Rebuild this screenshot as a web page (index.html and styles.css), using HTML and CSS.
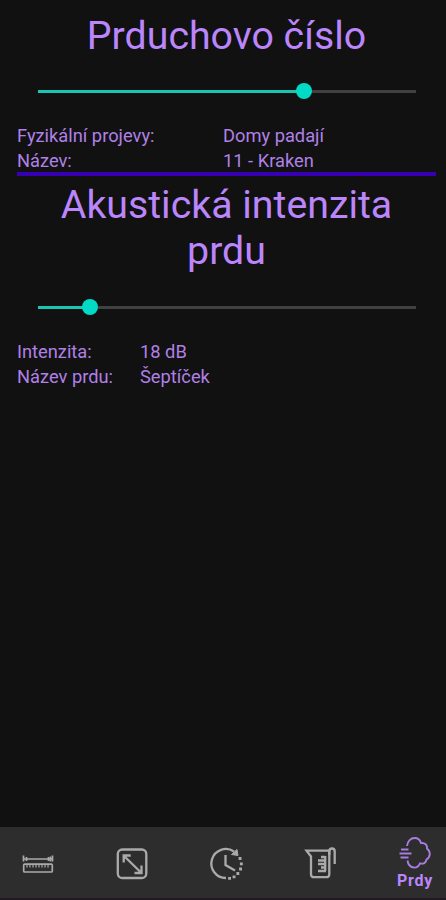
FILE: index.html
```html
<!DOCTYPE html>
<html lang="cs">
<head>
<meta charset="utf-8">
<title>Prdy</title>
<link rel="stylesheet" href="styles.css">
</head>
<body>
<main class="content">
  <section class="panel">
    <h1 class="title">Prduchovo číslo</h1>
    <div class="slider"><div class="fill" style="width:266.500px"></div><div class="thumb"></div><div class="rest"></div></div>
    <dl class="facts facts-wide">
      <dt>Fyzikální projevy:</dt><dd>Domy padají</dd>
      <dt>Název:</dt><dd>11 - Kraken</dd>
    </dl>
  </section>
  <hr class="divider">
  <section class="panel">
    <h1 class="title">Akustická intenzita prdu</h1>
    <div class="slider slider-low"><div class="fill" style="width:52.500px"></div><div class="thumb"></div><div class="rest"></div></div>
    <dl class="facts">
      <dt>Intenzita:</dt><dd>18 dB</dd>
      <dt>Název prdu:</dt><dd>Šeptíček</dd>
    </dl>
  </section>
</main>
<nav class="tabs">
  <a class="tab"><svg class="icon" viewBox="0 0 36 36"><g stroke-width="1.7"><path d="M3.500 10.500v6M32.500 10.500v6M4 14h28" /><path d="M6.500 12v4M28.500 12v4M30.500 11.500v5"/><rect x="3.700" y="19.200" width="28.600" height="7.800" rx="1"/><path d="M7 19.500v3M10 19.500v3M13 19.500v3M16 19.500v3M19 19.500v3M22 19.500v3M25 19.500v3M28 19.500v3" stroke-width="1.200"/></g></svg></a>
  <a class="tab"><svg class="icon" viewBox="0 0 36 36"><rect x="3.800" y="4.500" width="28.500" height="28.500" rx="4.500"/><path d="M10 11l17 16.500M9.700 17.500v-7h7M27.500 20.500v7.500h-7"/></svg></a>
  <a class="tab"><svg class="icon" viewBox="0 0 36 36"><path d="M18 33A14.500 14.500 0 1 1 26 6.500"/><path d="M29 4.500l1 6-6.500-1z" class="solid" stroke-width="1"/><path d="M17.500 10v10l9.500 5.500"/><path d="M32 13.500h.1M33.300 18.800h.1M32.500 24h.1M29.800 28.500h.1M26 31.800h.1M21.500 33.300h.1" stroke-width="2.800" stroke-linecap="square"/></svg></a>
  <a class="tab"><svg class="icon" viewBox="0 0 36 36"><path d="M4.500 5.700h22.800v23.500q0 3-3 3H12q-3 0-3-3V11.500z"/><path d="M27.300 10V6.500q0-3 2.700-3t2.700 3V19"/><path d="M16 15.500h7M19 12h4M16 19h7M19 22.500h4M16 26h8M23.200 11v15"/></svg></a>
  <a class="tab active"><svg class="icon" viewBox="0 0 36 36"><path d="M10 11c.5-5 4-8 7.500-8 3 0 5.500 1.500 6.500 5 4-.5 6.500 2 6 5.500 4 3.500 3.500 8.500-.5 11-.5 3.500-3 4.800-6.500 3.800-1.500 3.200-4 4.700-6.500 4.200-3.500-.5-5.500-3.500-6-7"/><path d="M4 14.500h7.500M2.500 18.500h12M3.500 22.500h8"/></svg><span class="label">Prdy</span></a>
</nav>
</body>
</html>
```
FILE: styles.css
```css
* { box-sizing: border-box; }
body {
  margin: 0;
  height: 900px;
  display: flex;
  flex-direction: column;
  overflow: hidden;
  background: #111;
  color: #bb86fc;
  font-family: Roboto, sans-serif;
}
.content { flex: 1; padding: 13px 10px 0 17px; }
.title {
  margin: 0;
  font-size: 39.300px;
  font-weight: 400;
  line-height: 46px;
  text-align: center;
}
.slider {
  display: flex;
  align-items: center;
  height: 20px;
  margin: 22px 20.500px 0 20.500px;
}
.slider-low { margin-top: 23px; }
.fill { flex: none; height: 3px; background: #1cc4b2; }
.thumb { flex: none; width: 16px; height: 16px; margin: 0 -8px; border-radius: 50%; background: #03dac5; z-index: 1; }
.rest { flex: 1; height: 3px; background: #414141; }
.facts {
  display: grid;
  grid-template-columns: 123px 1fr;
  margin: 23px 0 0;
  font-size: 18.300px;
  line-height: 24.500px;
  color: #b080e6;
}
.facts-wide { grid-template-columns: 206px 1fr; }
.facts dd { margin: 0; }
.divider { height: 4px; margin: -1px 0 6px; border: 0; background: #3700b3; }
.tabs {
  display: grid;
  grid-template-columns: repeat(5, 94px);
  width: 470px;
  height: 73px;
  margin-left: -9px;
  background: #2d2d2d;
  border-bottom: 2px solid #211a24;
}
.tab { display: flex; flex-direction: column; align-items: center; justify-content: center; padding-top: 1px; color: #aaa; }
.icon { width: 36px; height: 36px; fill: none; stroke: currentColor; stroke-width: 2.300; }
.solid { fill: currentColor; }
.active { padding-left: 2px; color: #a77de0; }
.active .icon { stroke-width: 1.900; }
.label { font-size: 16px; font-weight: 700; line-height: 20px; letter-spacing: 0.700px; color: #bb86fc; }
```
